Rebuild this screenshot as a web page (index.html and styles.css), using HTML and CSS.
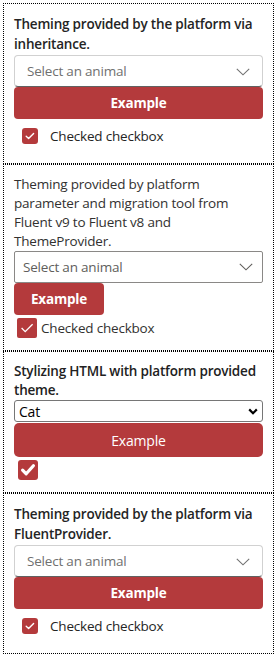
FILE: index.html
```html
<!DOCTYPE html>
<html lang="en">
<head>
<meta charset="utf-8">
<title>Theming samples</title>
<link rel="stylesheet" href="styles.css">
</head>
<body>
<main class="page">
  <section class="card">
    <div class="title title-v9">Theming provided by the platform via inheritance.</div>
    <button class="dd9" type="button">
      <span class="dd9-ph">Select an animal</span>
      <svg class="dd9-chev" width="14" height="8" viewBox="0 0 14 8"><polyline points="0.8,0.8 7,6.8 13.2,0.8" fill="none" stroke="#707070" stroke-width="1.1"/></svg>
    </button>
    <button class="btn9" type="button">Example</button>
    <label class="cb9">
      <span class="cb9-box"><svg width="16" height="16" viewBox="0 0 16 16"><polyline points="4.2,8.2 6.6,10.4 11.6,5.4" fill="none" stroke="#fff" stroke-width="1.4" stroke-linecap="round" stroke-linejoin="round"/></svg></span>
      <span class="cb9-label">Checked checkbox</span>
    </label>
  </section>

  <section class="card card-v8">
    <div class="title title-v8">Theming provided by platform parameter and migration tool from Fluent v9 to Fluent v8 and ThemeProvider.</div>
    <button class="dd8" type="button">
      <span class="dd8-ph">Select an animal</span>
      <svg class="dd8-chev" width="14" height="8" viewBox="0 0 14 8"><polyline points="0.8,0.8 7,6.8 13.2,0.8" fill="none" stroke="#605e5c" stroke-width="1.1"/></svg>
    </button>
    <div class="row8"><button class="btn8" type="button">Example</button></div>
    <label class="cb8">
      <span class="cb8-box"><svg width="20" height="20" viewBox="0 0 20 20"><polyline points="4.6,10 8.2,13.6 15.6,6.2" fill="none" stroke="#fff" stroke-width="1.3"/></svg></span>
      <span class="cb8-label">Checked checkbox</span>
    </label>
  </section>

  <section class="card card-html">
    <div class="title title-html">Stylizing HTML with platform provided theme.</div>
    <div class="sel-wrap">
      <select class="sel">
        <option>Cat</option>
        <option>Dog</option>
        <option>Bird</option>
      </select>
      <svg class="sel-chev" width="10" height="7" viewBox="0 0 10 7"><polyline points="1.2,1.4 5,5.2 8.8,1.4" fill="none" stroke="#000" stroke-width="2.2"/></svg>
    </div>
    <button class="btn-html" type="button">Example</button>
    <span class="cbh-box"><svg width="20" height="20" viewBox="0 0 20 20"><polyline points="4.6,10.2 8.2,13.8 15.4,5.8" fill="none" stroke="#fff" stroke-width="3.2" stroke-linecap="round" stroke-linejoin="round"/></svg></span>
  </section>

  <section class="card">
    <div class="title title-v9">Theming provided by the platform via FluentProvider.</div>
    <button class="dd9" type="button">
      <span class="dd9-ph">Select an animal</span>
      <svg class="dd9-chev" width="14" height="8" viewBox="0 0 14 8"><polyline points="0.8,0.8 7,6.8 13.2,0.8" fill="none" stroke="#707070" stroke-width="1.1"/></svg>
    </button>
    <button class="btn9" type="button">Example</button>
    <label class="cb9">
      <span class="cb9-box"><svg width="16" height="16" viewBox="0 0 16 16"><polyline points="4.2,8.2 6.6,10.4 11.6,5.4" fill="none" stroke="#fff" stroke-width="1.4" stroke-linecap="round" stroke-linejoin="round"/></svg></span>
      <span class="cb9-label">Checked checkbox</span>
    </label>
  </section>
</main>
</body>
</html>
```

FILE: styles.css
```css
* { box-sizing: border-box; }

html, body {
  margin: 0;
  padding: 0;
  background: #fff;
}

body {
  font-family: "Open Sans", "Noto Sans", sans-serif;
  font-size: 13.5px;
  letter-spacing: -0.2px;
  color: #242424;
}

.page {
  padding: 3px 4px 3px 3px;
  display: flex;
  flex-direction: column;
}

.card {
  border: 1px dotted #000;
  padding: 10px;
  display: flex;
  flex-direction: column;
}

.title {
  line-height: 20px;
}

.title-v9 {
  font-weight: 600;
  color: #242424;
  margin-bottom: 1px;
}

.title-v8 {
  font-weight: 400;
  color: #323130;
  line-height: 19px;
}

.title-html {
  font-weight: 600;
  color: #212121;
  line-height: 19px;
}

button {
  font-family: inherit;
  letter-spacing: inherit;
  cursor: pointer;
}

/* Fluent v9 dropdown */
.dd9 {
  height: 32px;
  display: flex;
  align-items: center;
  justify-content: space-between;
  padding: 0 12px 0 12px;
  background: #fff;
  border: 1px solid #d1d1d1;
  border-bottom-color: #616161;
  border-radius: 4px;
  font-size: 13.5px;
  text-align: left;
}

.dd9-ph { color: #707070; }

.dd9-chev { margin-top: 1px; }

.btn9 {
  height: 32px;
  border: none;
  border-radius: 4px;
  background: #b43a3c;
  color: #fff;
  font-weight: 700;
  font-size: 13.5px;
}

.cb9 {
  display: flex;
  align-items: center;
  gap: 12px;
  padding: 8px;
  color: #242424;
}

.cb9-box {
  width: 16px;
  height: 16px;
  border-radius: 3px;
  background: #b43a3c;
  display: flex;
}

/* Fluent v8 */
.card-v8 {
  padding-bottom: 12px;
}

.dd8 {
  height: 32px;
  display: flex;
  align-items: center;
  justify-content: space-between;
  padding: 0 9px 0 8px;
  background: #fff;
  border: 1px solid #8a8886;
  border-radius: 2px;
  font-size: 13.5px;
  text-align: left;
}

.dd8-ph { color: #605e5c; }

.row8 {
  display: flex;
}

.btn8 {
  height: 32px;
  min-width: 80px;
  padding: 0 17px;
  border: none;
  border-radius: 4px;
  background: #b43a3c;
  color: #fff;
  font-weight: 700;
  font-size: 13.5px;
}

.cb8 {
  display: flex;
  align-items: center;
  gap: 4px;
  margin: 3px 0 0 3px;
  line-height: 20px;
  color: #323130;
}

.cb8-box {
  width: 20px;
  height: 20px;
  border-radius: 2px;
  background: #b43a3c;
  display: flex;
}

/* Plain HTML */
.card-html {
  padding-bottom: 12px;
}

.sel-wrap {
  position: relative;
  display: flex;
}

.sel {
  appearance: none;
  -webkit-appearance: none;
  width: 100%;
  height: 22px;
  padding: 0 20px 0 4px;
  border: 1px solid #767676;
  border-radius: 3px;
  background: #fff;
  color: #000;
  font-family: inherit;
  font-size: 14px;
  letter-spacing: inherit;
}

.sel-chev {
  position: absolute;
  right: 5px;
  top: 8px;
  pointer-events: none;
}

.btn-html {
  margin-top: 1px;
  height: 34px;
  border: none;
  border-radius: 5px;
  background: #b43a3c;
  color: #fff;
  font-weight: 400;
  font-size: 14px;
}

.cbh-box {
  margin: 3px 0 0 4px;
  width: 20px;
  height: 20px;
  border-radius: 3px;
  background: #b43a3c;
  display: flex;
}
```
